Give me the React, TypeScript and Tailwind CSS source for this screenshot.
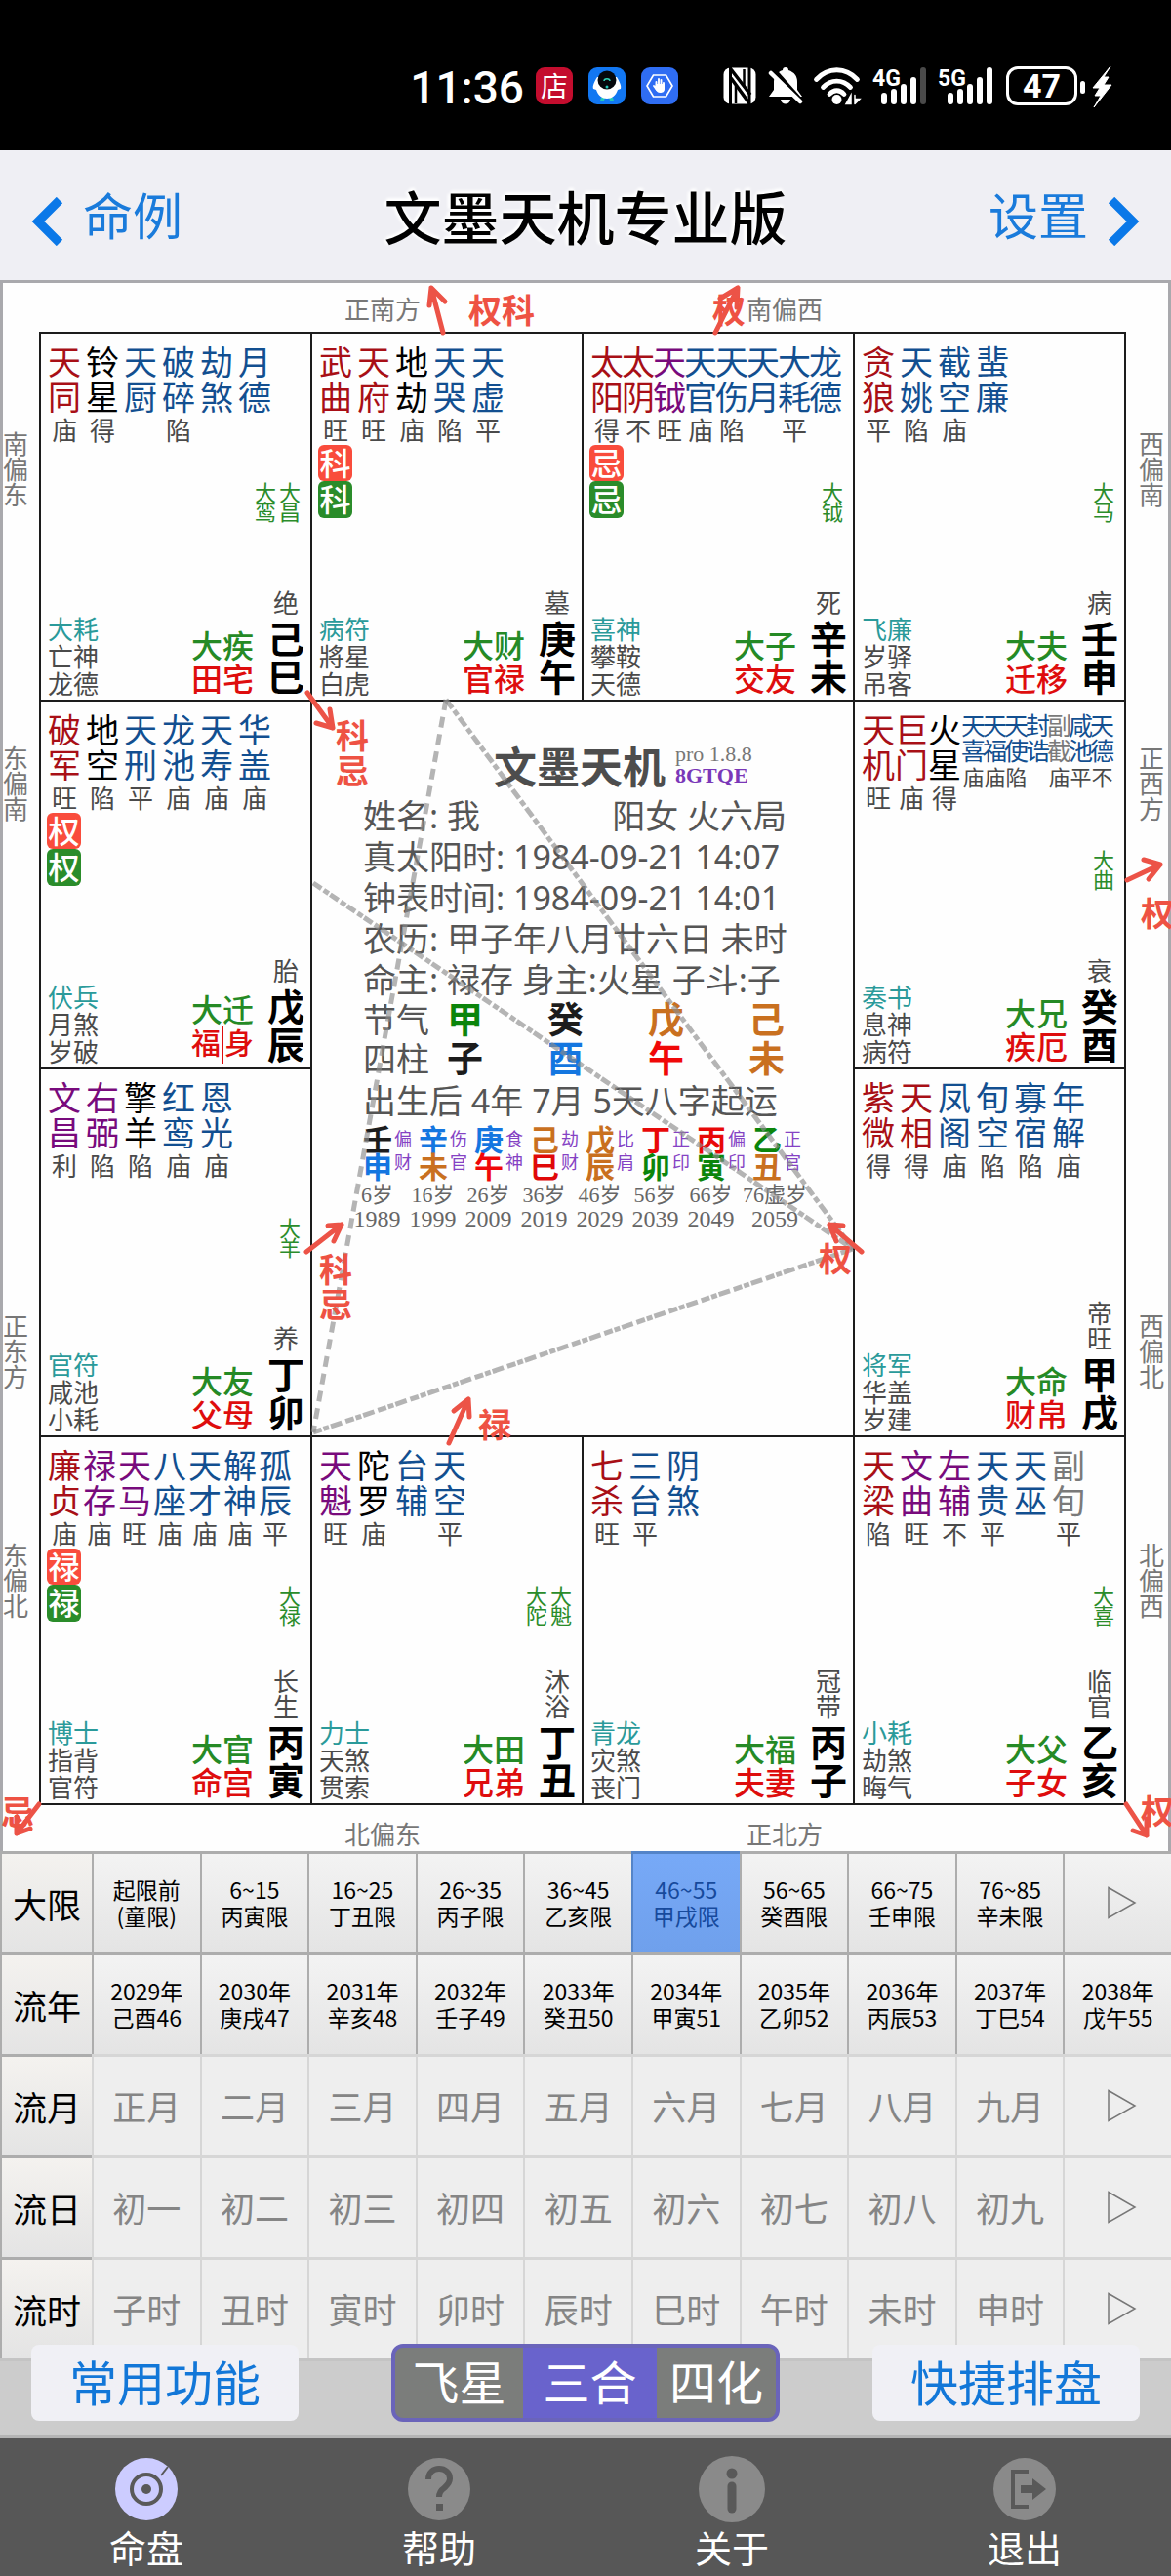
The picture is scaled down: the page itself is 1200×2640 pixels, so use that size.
import React from "react";

type Tone = "r" | "k" | "b" | "p" | "g";
type Star = [name: string, tone: Tone, level?: string];

const toneClass: Record<Tone, string> = {
  r: "text-[#a80f16]",
  k: "text-black",
  b: "text-[#124f90]",
  p: "text-[#780a7c]",
  g: "text-[#7a7a7a]",
};

type Palace = {
  stars: Star[];
  small?: Star[];
  step: string;
  badge?: string;
  decade?: string[];
  notes: [string, string, string];
  flow: string;
  palace: string;
  phase: string;
  branch: string;
};

const wide = "w-[39px]";

const palaces: Record<string, Palace> = {
  si: {
    step: wide,
    stars: [["天同", "r", "庙"], ["铃星", "k", "得"], ["天厨", "b"], ["破碎", "b", "陷"], ["劫煞", "b"], ["月德", "b"]],
    decade: ["大鸾", "大昌"],
    notes: ["大耗", "亡神", "龙德"],
    flow: "大疾",
    palace: "田宅",
    phase: "绝",
    branch: "己巳",
  },
  wu: {
    step: wide,
    stars: [["武曲", "r", "旺"], ["天府", "r", "旺"], ["地劫", "k", "庙"], ["天哭", "b", "陷"], ["天虚", "b", "平"]],
    badge: "科",
    notes: ["病符", "將星", "白虎"],
    flow: "大财",
    palace: "官禄",
    phase: "墓",
    branch: "庚午",
  },
  wei: {
    step: "w-[32px]",
    stars: [
      ["太阳", "r", "得"], ["太阴", "r", "不"], ["天钺", "p", "旺"], ["天官", "b", "庙"],
      ["天伤", "b", "陷"], ["天月", "b"], ["大耗", "b", "平"], ["龙德", "b"],
    ],
    badge: "忌",
    decade: ["大钺"],
    notes: ["喜神", "攀鞍", "天德"],
    flow: "大子",
    palace: "交友",
    phase: "死",
    branch: "辛未",
  },
  shen: {
    step: wide,
    stars: [["贪狼", "r", "平"], ["天姚", "b", "陷"], ["截空", "b", "庙"], ["蜚廉", "b"]],
    decade: ["大马"],
    notes: ["飞廉", "岁驿", "吊客"],
    flow: "大夫",
    palace: "迁移",
    phase: "病",
    branch: "壬申",
  },
  chen: {
    step: wide,
    stars: [["破军", "r", "旺"], ["地空", "k", "陷"], ["天刑", "b", "平"], ["龙池", "b", "庙"], ["天寿", "b", "庙"], ["华盖", "b", "庙"]],
    badge: "权",
    notes: ["伏兵", "月煞", "岁破"],
    flow: "大迁",
    palace: "福|身",
    phase: "胎",
    branch: "戊辰",
  },
  you: {
    step: "w-[34px]",
    stars: [["天机", "r", "旺"], ["巨门", "r", "庙"], ["火星", "k", "得"]],
    small: [
      ["天喜", "b", "庙"], ["天福", "b", "庙"], ["天使", "b", "陷"], ["封诰", "b"],
      ["副截", "g", "庙"], ["咸池", "b", "平"], ["天德", "b", "不"],
    ],
    decade: ["大曲"],
    notes: ["奏书", "息神", "病符"],
    flow: "大兄",
    palace: "疾厄",
    phase: "衰",
    branch: "癸酉",
  },
  mao: {
    step: wide,
    stars: [["文昌", "p", "利"], ["右弼", "p", "陷"], ["擎羊", "k", "陷"], ["红鸾", "b", "庙"], ["恩光", "b", "庙"]],
    decade: ["大羊"],
    notes: ["官符", "咸池", "小耗"],
    flow: "大友",
    palace: "父母",
    phase: "养",
    branch: "丁卯",
  },
  xu: {
    step: wide,
    stars: [["紫微", "r", "得"], ["天相", "r", "得"], ["凤阁", "b", "庙"], ["旬空", "b", "陷"], ["寡宿", "b", "陷"], ["年解", "b", "庙"]],
    notes: ["将军", "华盖", "岁建"],
    flow: "大命",
    palace: "财帛",
    phase: "帝旺",
    branch: "甲戌",
  },
  yin: {
    step: "w-[36px]",
    stars: [
      ["廉贞", "r", "庙"], ["禄存", "p", "庙"], ["天马", "p", "旺"], ["八座", "b", "庙"],
      ["天才", "b", "庙"], ["解神", "b", "庙"], ["孤辰", "b", "平"],
    ],
    badge: "禄",
    decade: ["大禄"],
    notes: ["博士", "指背", "官符"],
    flow: "大官",
    palace: "命宫",
    phase: "长生",
    branch: "丙寅",
  },
  chou: {
    step: wide,
    stars: [["天魁", "p", "旺"], ["陀罗", "k", "庙"], ["台辅", "b"], ["天空", "b", "平"]],
    decade: ["大陀", "大魁"],
    notes: ["力士", "天煞", "贯索"],
    flow: "大田",
    palace: "兄弟",
    phase: "沐浴",
    branch: "丁丑",
  },
  zi: {
    step: wide,
    stars: [["七杀", "r", "旺"], ["三台", "b", "平"], ["阴煞", "b"]],
    notes: ["青龙", "灾煞", "丧门"],
    flow: "大福",
    palace: "夫妻",
    phase: "冠带",
    branch: "丙子",
  },
  hai: {
    step: wide,
    stars: [["天梁", "r", "陷"], ["文曲", "p", "旺"], ["左辅", "p", "不"], ["天贵", "b", "平"], ["天巫", "b"], ["副旬", "g", "平"]],
    decade: ["大喜"],
    notes: ["小耗", "劫煞", "晦气"],
    flow: "大父",
    palace: "子女",
    phase: "临官",
    branch: "乙亥",
  },
};

function PalaceCell({ id }: { id: string }) {
  const p = palaces[id];
  return (
    <section className="flex min-h-[377px] min-w-0 flex-col border-r-2 border-b-2 border-[#1c1c1c] pb-[2px]">
      <div className="flex h-[114px] pt-[11px] pl-[7px]">
        {p.stars.map(([name, tone, level], i) => (
          <div key={i} className={`shrink-0 ${p.step}`}>
            <div className={`w-[34px] text-[34px] leading-[36px] break-all ${toneClass[tone]}`}>{name}</div>
            <div className="mt-[3px] w-[34px] text-center text-[26px] leading-[26px] text-[#4a4a4a]">{level}</div>
          </div>
        ))}
        {p.small?.map(([name, tone, level], i) => (
          <div key={i} className="w-[22px] shrink-0">
            <div className={`w-[25px] text-[25px] leading-[26px] break-all ${toneClass[tone]}`}>{name}</div>
            <div className="mt-[3px] w-[25px] text-center text-[22px] leading-[22px] text-[#4a4a4a]">{level}</div>
          </div>
        ))}
      </div>
      <div className="flex items-start justify-between pr-[10px] pl-[6px]">
        <div>
          {p.badge && (
            <div className="w-[35px] text-center text-[32px] leading-[37px] font-medium text-white">
              <div className="h-[37px] rounded-[6px] bg-[#f94c3c]">{p.badge}</div>
              <div className="h-[38px] rounded-[6px] bg-[#2a8c2a]">{p.badge}</div>
            </div>
          )}
        </div>
        <div className="mt-[38px] flex gap-[3px] text-[22px] leading-[20px] text-[#2a8c2a]">
          {p.decade?.map((d) => (
            <div key={d} className="w-[22px] break-all">{d}</div>
          ))}
        </div>
      </div>
      <div className="mt-auto flex items-end pr-[6px] pl-[7px]">
        <div className="text-[26px] leading-[28px] text-[#4a4a4a]">
          <div className="text-[#2a9a9a]">{p.notes[0]}</div>
          <div>{p.notes[1]}</div>
          <div>{p.notes[2]}</div>
        </div>
        <div className="mb-[2px] ml-auto text-center text-[32px] leading-[34px] font-medium">
          <div className="text-[#258a25]">{p.flow}</div>
          <div className="text-[#de0d0d]">
            {p.palace.includes("|") ? (
              <span className="flex w-[64px] justify-between text-[30px]">
                <span>福</span>
                <span className="h-[38px] w-[2px] bg-[#de0d0d]" />
                <span>身</span>
              </span>
            ) : (
              p.palace
            )}
          </div>
        </div>
        <div className="mb-[2px] ml-[14px] flex w-[38px] flex-col items-center">
          <div className="mb-[4px] w-[26px] text-[26px] leading-[26px] break-all text-[#4a4a4a]">{p.phase}</div>
          <div className="w-[38px] text-[38px] leading-[39px] font-bold break-all">{p.branch}</div>
        </div>
      </div>
    </section>
  );
}

const pillars = [
  ["甲", "text-[#0b850b]", "子", "text-[#1c1c1c]"],
  ["癸", "text-[#1c1c1c]", "酉", "text-[#1476e0]"],
  ["戊", "text-[#c9701f]", "午", "text-[#f00808]"],
  ["己", "text-[#c9701f]", "未", "text-[#c9701f]"],
];

const luck = [
  ["壬", "text-[#1c1c1c]", "申", "text-[#1476e0]", "偏财", "6岁", "1989"],
  ["辛", "text-[#1476e0]", "未", "text-[#c9701f]", "伤官", "16岁", "1999"],
  ["庚", "text-[#1476e0]", "午", "text-[#f00808]", "食神", "26岁", "2009"],
  ["己", "text-[#c9701f]", "巳", "text-[#e00808]", "劫财", "36岁", "2019"],
  ["戊", "text-[#c9701f]", "辰", "text-[#c9701f]", "比肩", "46岁", "2029"],
  ["丁", "text-[#e80808]", "卯", "text-[#0b850b]", "正印", "56岁", "2039"],
  ["丙", "text-[#e80808]", "寅", "text-[#0b850b]", "偏印", "66岁", "2049"],
  ["乙", "text-[#0b850b]", "丑", "text-[#c9701f]", "正官", "76虚岁", "2059"],
];

const serif = "font-['Liberation_Serif','Noto_Sans_CJK_SC',serif]";

function Center() {
  return (
    <section className="col-span-2 row-span-2 border-r-2 border-b-2 border-[#1c1c1c] pt-[43px] text-[#555]">
      <div className="flex pl-[186px]">
        <h2 className="text-[44px] leading-[48px] font-bold text-[#4d4d4d]">文墨天机</h2>
        <div className={`ml-[10px] ${serif}`}>
          <div className="text-[22px] leading-[22px] text-[#777]">pro 1.8.8</div>
          <div className="text-[22px] leading-[22px] font-bold text-[#7a38b8]">8GTQE</div>
        </div>
      </div>
      <div className="mt-[5px] ml-[52px] w-[434px] text-[34px] leading-[42px] whitespace-nowrap">
        <div className="flex justify-between">
          <span>姓名: 我</span>
          <span>阳女 火六局</span>
        </div>
        <div>真太阳时: 1984-09-21 14:07</div>
        <div>钟表时间: 1984-09-21 14:01</div>
        <div>农历: 甲子年八月廿六日 未时</div>
        <div>命主: 禄存 身主:火星 子斗:子</div>
        <div className="flex">
          <div className="w-[86px] shrink-0 leading-[40px]">
            <div>节气</div>
            <div>四柱</div>
          </div>
          {pillars.map(([a, ac, b, bc], i) => (
            <div key={i} className="w-[103px] shrink-0 text-[37px] leading-[40px] font-bold">
              <div className={ac}>{a}</div>
              <div className={bc}>{b}</div>
            </div>
          ))}
        </div>
        <div className="leading-[46px]">出生后 4年 7月 5天八字起运</div>
      </div>
      <div className="mt-[3px] ml-[38px] flex whitespace-nowrap">
        {luck.map(([a, ac, b, bc, god, age, year]) => (
          <div key={year} className="w-[57px] shrink-0 last:w-[74px]">
            <div className="flex gap-[2px] pl-[14px]">
              <div className="w-[30px] text-[30px] leading-[28px] font-bold">
                <div className={ac}>{a}</div>
                <div className={bc}>{b}</div>
              </div>
              <div className="w-[18px] pt-[1px] text-[18px] leading-[24px] break-all whitespace-normal text-[#8542c4]">{god}</div>
            </div>
            <div className={`mt-[2px] text-center leading-[25px] text-[#666] ${serif}`}>
              <div className="text-[22px]">{age}</div>
              <div className="text-[24px]">{year}</div>
            </div>
          </div>
        ))}
      </div>
    </section>
  );
}

const arrows = [
  "M454 341 442 295M440 313 442 295 456 309",
  "M733 341 756 295M738 306 756 295 755 315",
  "M315 710 341 746M324 741 341 746 338 727",
  "M1155 902 1189 886M1172 881 1189 886 1177 901",
  "M314 1283 350 1255M336 1256 350 1255 342 1272",
  "M883 1283 850 1255M864 1256 850 1255 857 1272",
  "M460 1479 480 1434M465 1446 480 1434 481 1452",
  "M40 1849 17 1879M17 1862 17 1879 31 1874",
  "M1154 1849 1175 1881M1161 1876 1175 1881 1175 1864",
];

const marks: [string, number, number][] = [
  ["权科", 480, 331],
  ["权", 730, 331],
  ["科", 344, 767],
  ["忌", 344, 803],
  ["权", 1169, 949],
  ["科", 327, 1314],
  ["忌", 327, 1350],
  ["权", 839, 1303],
  ["禄", 490, 1473],
  ["忌", 1, 1870],
  ["权", 1169, 1869],
];

function FlightLines() {
  return (
    <svg
      className="pointer-events-none absolute inset-0 h-full w-full overflow-visible"
      viewBox="3 290 1194 1607"
      preserveAspectRatio="none"
      fill="none"
    >
      <g stroke="#8c8c8c" strokeOpacity="0.65" strokeWidth="5">
        <path d="M457 717 321 1468" strokeDasharray="11 7" />
        <path d="M457 717 874 1280" strokeDasharray="11 3 6 3" />
        <path d="M321 1468 874 1280" strokeDasharray="9 2 6 2 12 4" />
        <path d="M321 905 874 1280" strokeDasharray="10 3 6 2" />
      </g>
      <g stroke="#ec5347" strokeWidth="5" strokeLinecap="round" strokeLinejoin="round">
        {arrows.map((d) => (
          <path key={d} d={d} />
        ))}
      </g>
      <g fill="#ee5243" fontSize="34" fontWeight="700">
        {marks.map(([t, x, y]) => (
          <text key={`${x}-${y}`} x={x} y={y}>{t}</text>
        ))}
      </g>
    </svg>
  );
}

const side = "w-[26px] break-all text-[26px] leading-[26px] text-[#777]";

function SideLabels({ names, className }: { names: string[]; className: string }) {
  return (
    <div className={className}>
      <div className={`mt-[102px] ${side}`}>{names[0]}</div>
      <div className={`mt-[244px] ${side}`}>{names[1]}</div>
      <div className={`mt-[504px] ${side}`}>{names[2]}</div>
      <div className={`mt-[157px] ${side}`}>{names[3]}</div>
    </div>
  );
}

function Chart() {
  return (
    <main className="relative border-x-[3px] border-t-[3px] border-[#a9a9ad] bg-[#fefefe]">
      <div className="flex h-[50px] justify-center gap-[334px] pt-[12px] pr-[4px] text-[26px] leading-[30px] text-[#777]">
        <span>正南方</span>
        <span>南偏西</span>
      </div>
      <div className="grid grid-cols-[37px_1fr_43px]">
        <SideLabels names={["南偏东", "东偏南", "正东方", "东偏北"]} className="" />
        <div className="grid grid-cols-4 border-t-2 border-l-2 border-[#1c1c1c]">
          <PalaceCell id="si" />
          <PalaceCell id="wu" />
          <PalaceCell id="wei" />
          <PalaceCell id="shen" />
          <PalaceCell id="chen" />
          <Center />
          <PalaceCell id="you" />
          <PalaceCell id="mao" />
          <PalaceCell id="xu" />
          <PalaceCell id="yin" />
          <PalaceCell id="chou" />
          <PalaceCell id="zi" />
          <PalaceCell id="hai" />
        </div>
        <SideLabels names={["西偏南", "正西方", "西偏北", "北偏西"]} className="pl-[13px]" />
      </div>
      <div className="flex h-[47px] justify-center gap-[334px] pt-[15px] pr-[4px] text-[26px] leading-[30px] text-[#777]">
        <span>北偏东</span>
        <span>正北方</span>
      </div>
      <FlightLines />
    </main>
  );
}

type Row = { label: string; cells: string[]; off?: boolean; picked?: number; more: boolean };

const rows: Row[] = [
  {
    label: "大限",
    cells: ["起限前\n(童限)", "6~15\n丙寅限", "16~25\n丁丑限", "26~35\n丙子限", "36~45\n乙亥限", "46~55\n甲戌限", "56~65\n癸酉限", "66~75\n壬申限", "76~85\n辛未限"],
    picked: 5,
    more: true,
  },
  {
    label: "流年",
    cells: ["2029年\n己酉46", "2030年\n庚戌47", "2031年\n辛亥48", "2032年\n壬子49", "2033年\n癸丑50", "2034年\n甲寅51", "2035年\n乙卯52", "2036年\n丙辰53", "2037年\n丁巳54", "2038年\n戊午55"],
    more: false,
  },
  { label: "流月", cells: ["正月", "二月", "三月", "四月", "五月", "六月", "七月", "八月", "九月"], off: true, more: true },
  { label: "流日", cells: ["初一", "初二", "初三", "初四", "初五", "初六", "初七", "初八", "初九"], off: true, more: true },
  { label: "流时", cells: ["子时", "丑时", "寅时", "卯时", "辰时", "巳时", "午时", "未时", "申时"], off: true, more: true },
];

const live = "border-[#adadad] bg-linear-to-b from-[#f3f3f3] to-[#e4e4e4]";
const idle = "border-[#d6d6d6] bg-[#eeeeee]";

function TimeTable() {
  return (
    <table className="w-full table-fixed border-separate border-spacing-0 border-b-[3px] border-[#c4c4c4]">
      <colgroup>
        <col className="w-[94px]" />
      </colgroup>
      <tbody>
        {rows.map((r) => (
          <tr key={r.label} className="h-[104px]">
            <th
              scope="row"
              className="border-t-[3px] border-l-2 border-[#adadad] bg-linear-to-b from-[#f4f2ef] to-[#e4e4e4] p-0 text-[35px] leading-[40px] font-normal text-black"
            >
              {r.label}
            </th>
            {r.cells.map((c, i) => (
              <td
                key={c}
                className={`border-t-[3px] border-l-2 p-0 ${
                  r.picked === i ? "border-[#5484c8] bg-linear-to-b from-[#77a9f7] to-[#6fa0ec]" : r.off ? idle : live
                }`}
              >
                <button
                  className={`block h-[101px] w-full pb-[2px] whitespace-pre ${
                    r.off
                      ? "text-[35px] leading-[40px] text-[#858585]"
                      : r.picked === i
                        ? "text-[23px] leading-[27px] text-[#174a9c]"
                        : "text-[23px] leading-[27px] text-black"
                  }`}
                >
                  {c}
                </button>
              </td>
            ))}
            {r.more && (
              <td className={`border-t-[3px] border-l-2 p-0 ${r.off ? idle : live}`}>
                <button aria-label="更多" className="flex h-[101px] w-full items-center justify-center pb-[2px] pl-[8px]">
                  <svg width="30" height="34" viewBox="0 0 30 34" fill="none" stroke="#777" strokeWidth="1.5">
                    <path d="M1 1.500 28 17 1 32.500Z" />
                  </svg>
                </button>
              </td>
            )}
          </tr>
        ))}
      </tbody>
    </table>
  );
}

function Bars({ x, faded }: { x: number; faded?: boolean }) {
  const tops = [95, 91, 86, 79, 69];
  return (
    <g strokeWidth="6" strokeLinecap="round">
      {tops.map((t, i) => (
        <path key={i} d={`M${x + i * 10} ${t + 3}V104`} stroke={faded && i === 4 ? "#4a4a4a" : "#fff"} />
      ))}
    </g>
  );
}

function StatusBar() {
  return (
    <div className="flex h-[154px] items-start bg-black pt-[67px] pr-[60px] text-white">
      <span className="ml-auto font-[Roboto] text-[46px] leading-[46px] font-medium">11:36</span>
      <span className="mt-[2px] ml-[12px] flex size-[38px] items-center justify-center rounded-[9px] bg-[#c40d2e] text-[28px] leading-[38px]">店</span>
      <svg className="mt-[2px] ml-[16px]" width="38" height="38" viewBox="0 0 38 38">
        <rect width="38" height="38" rx="9" fill="#1277f2" />
        <path d="M13 31h4l-1 3h-4zM21 31h4l1 3h-4z" fill="#25c7b8" />
        <path d="M9 10c-3 5-5 9-4 12l3 1c2 6 6 9 11 9s9-3 11-9l3-1c1-3-1-7-4-12z" fill="#fff" />
        <circle cx="19" cy="13" r="9.500" fill="#05080c" />
        <path d="M16 14c0-3 6-3 6 0" stroke="#2fd0b4" strokeWidth="1.500" fill="none" />
        <circle cx="19" cy="20" r="1.500" fill="#25c7b8" />
      </svg>
      <svg className="mt-[2px] ml-[16px]" width="38" height="38" viewBox="0 0 38 38" fill="none">
        <rect width="38" height="38" rx="9" fill="#2f6df3" />
        <path d="M12.500 8h13L32 19l-6.500 11h-13L6 19z" stroke="#fff" strokeWidth="1.700" />
        <path d="M15.500 20v-5M18 18v-6M20.500 18v-5M23 20v-4M13 19l3 4" stroke="#fff" strokeWidth="1.900" strokeLinecap="round" />
        <path d="M15 17h9v5c0 3-2 4-4.500 4S15 24 14 21z" fill="#fff" />
      </svg>
      <svg className="mt-[2px] ml-[46px]" width="34" height="38" viewBox="740 69 34 38">
        <rect x="740.500" y="69.500" width="33" height="37" rx="7" fill="#fff" />
        <path d="M747.500 69v38M767 69v38" stroke="#000" strokeWidth="3" />
        <path d="M748 71 768 97M748 80 767 106" stroke="#000" strokeWidth="3.500" />
        <path d="M753 88v18M761.500 71v18" stroke="#000" strokeWidth="2.500" />
      </svg>
      <svg className="mt-[2px] ml-[12px]" width="36" height="40" viewBox="786 69 36 40">
        <path d="M804 69c2 0 3 1 3 3 6 2 9 6 9 12v8l5 7H787l5-7v-8c0-6 3-10 9-12 0-2 1-3 3-3zM799 102h10c-1 6-9 6-10 0z" fill="#fff" />
        <path d="M791 71 823 107" stroke="#000" strokeWidth="5" />
        <path d="M789 75 819 104" stroke="#fff" strokeWidth="4.500" strokeLinecap="round" />
      </svg>
      <svg className="mt-[2px] ml-[10px]" width="50" height="40" viewBox="833 69 50 40" fill="none" stroke="#fff" strokeLinecap="round">
        <path d="M836.500 81.500c12-13 30-13 42 0M843.500 89.500c8-8.500 20-8.500 28 0M850 96.500c4.500-5 10.500-5 15 0" strokeWidth="4.800" />
        <circle cx="857.500" cy="102" r="5" fill="#fff" stroke="none" />
        <path d="M872 97.500v9h-5zM876 106.500v-9M876 106.500h0l5-5h-5" fill="#fff" strokeWidth="1.500" />
      </svg>
      <svg className="mt-[2px] ml-[10px] overflow-visible" width="58" height="40" viewBox="893 69 58 40">
        <text x="894" y="88" fontSize="23" fontWeight="700" fontFamily="Roboto" fill="#fff">4G</text>
        <Bars x={906} faded />
      </svg>
      <svg className="mt-[2px] ml-[10px] overflow-visible" width="60" height="40" viewBox="961 69 60 40">
        <text x="961" y="88" fontSize="23" fontWeight="700" fontFamily="Roboto" fill="#fff">5G</text>
        <Bars x={974} />
      </svg>
      <span className="mt-px ml-[10px] flex h-[40px] w-[73px] items-center justify-center rounded-[12px] border-[3px] border-white font-[Roboto] text-[34px] leading-[34px] font-bold">47</span>
      <svg className="mt-[1px] ml-[2px]" width="34" height="42" viewBox="1105 67 34 42" fill="#fff">
        <rect x="1106" y="82" width="5" height="13" rx="2.500" />
        <path d="M1137 67 1119 89h7l-5 8h6l-7 12 18-23h-8l5-8h-5z" stroke="#fff" strokeWidth="1" strokeLinejoin="round" />
      </svg>
    </div>
  );
}

function NavIcon({ kind }: { kind: string }) {
  const lit = kind === "chart";
  const s = "#595959";
  return (
    <svg width="68" height="68" viewBox="0 0 68 68" fill="none">
      <circle cx="34" cy="34" r={kind === "about" ? 34 : 32} fill={lit ? "#ccccff" : "#8a8a8a"} />
      {kind === "chart" && (
        <g stroke={s}>
          <circle cx="34" cy="34" r="15" strokeWidth="4" />
          <circle cx="34" cy="34" r="5" fill={s} stroke="none" />
          <path d="M49 20 56 11" strokeWidth="2" />
        </g>
      )}
      {kind === "help" && (
        <g>
          <path d="M23 24c0-7 5-11 11-11s11 4 11 10c0 5-3 7-6 10-3 2-5 4-5 9" stroke={s} strokeWidth="6" />
          <rect x="31" y="49" width="7" height="7" fill={s} />
        </g>
      )}
      {kind === "about" && (
        <g>
          <circle cx="34" cy="18" r="5.500" fill={s} />
          <path d="M34 31v23" stroke={s} strokeWidth="9" strokeLinecap="round" />
        </g>
      )}
      {kind === "exit" && (
        <g>
          <path d="M38 16H22v36h16" stroke={s} strokeWidth="4" />
          <path d="M30 30h12v-7l14 11-14 11v-7H30z" fill={s} />
        </g>
      )}
    </svg>
  );
}

const nav = [
  ["chart", "命盘"],
  ["help", "帮助"],
  ["about", "关于"],
  ["exit", "退出"],
];

export default function App() {
  return (
    <div className="w-full overflow-hidden bg-[#cccccc] font-['Noto_Sans','Noto_Sans_CJK_SC',sans-serif] text-black">
      <StatusBar />
      <header className="flex h-[133px] items-center justify-between bg-[#efeff4] px-[32px]">
        <button className="flex items-center gap-[20px] text-[51px] leading-[60px] text-[#1a7bdb]">
          <svg className="mt-[12px]" width="33" height="50" viewBox="0 0 33 50" fill="none" stroke="#0a78e8" strokeWidth="9">
            <path d="M29 3 7 25 29 47" />
          </svg>
          命例
        </button>
        <h1 className="pt-[4px] text-[59px] leading-[70px] font-medium [text-shadow:0_-3px_3px_#fff,-3px_0_3px_#fff]">文墨天机专业版</h1>
        <button className="flex items-center gap-[20px] text-[51px] leading-[60px] text-[#1a7bdb]">
          设置
          <svg className="mt-[12px]" width="33" height="50" viewBox="0 0 33 50" fill="none" stroke="#0a78e8" strokeWidth="9">
            <path d="M4 3 26 25 4 47" />
          </svg>
        </button>
      </header>
      <Chart />
      <div className="font-['Noto_Sans_CJK_SC',sans-serif]">
        <TimeTable />
      </div>
      <div className="relative -mt-[18px] flex items-center justify-between border-b-[3px] border-[#b4b4b4] px-[32px] pb-[14px]">
        <button className="h-[78px] w-[274px] rounded-[8px] bg-[#f0f0f5] text-[49px] leading-[70px] text-[#1277d8]">常用功能</button>
        <div className="flex h-[80px] overflow-hidden rounded-[12px] border-4 border-[#6a64ba] bg-[#7b7d7b] text-[48px] leading-[66px] text-white">
          <button className="w-[131px]">飞星</button>
          <button className="w-[137px] bg-[#6963cc]">三合</button>
          <button className="w-[122px]">四化</button>
        </div>
        <button className="h-[78px] w-[274px] rounded-[8px] bg-[#f0f0f5] text-[49px] leading-[70px] text-[#1277d8]">快捷排盘</button>
      </div>
      <nav className="grid grid-cols-4 bg-[#575757] pt-[18px] pb-[4px]">
        {nav.map(([kind, label]) => (
          <button key={kind} className="flex flex-col items-center text-[38px] leading-[52px] text-white">
            <NavIcon kind={kind} />
            {label}
          </button>
        ))}
      </nav>
    </div>
  );
}
